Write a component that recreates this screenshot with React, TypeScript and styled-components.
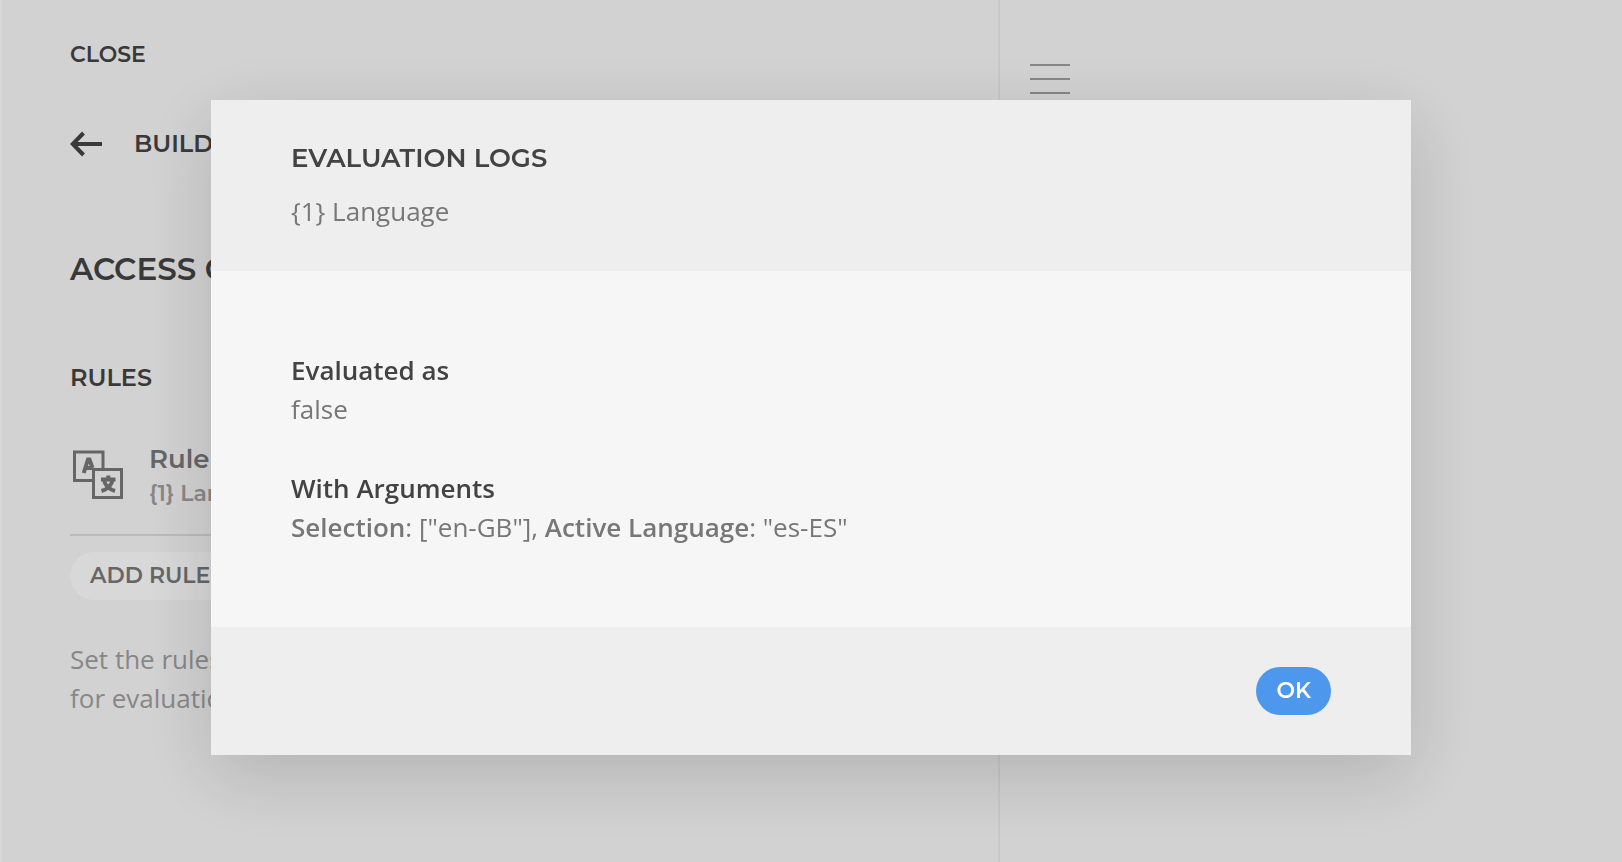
import React from "react";
import styled, { createGlobalStyle } from "styled-components";

const display = `Montserrat, Inter, "Liberation Sans", sans-serif`;
const text = `"Open Sans", "Noto Sans", sans-serif`;

const GlobalStyle = createGlobalStyle`
  *, *::before, *::after { box-sizing: border-box; }
  body { margin: 0; background: #f5f5f5; font-family: ${text}; }
  h1, h2, h3, p, dl, dt, dd, ul { margin: 0; padding: 0; }
  button { border: 0; padding: 0; background: none; cursor: pointer; }
`;

const Page = styled.div`
  display: grid;
  grid-template-columns: minmax(0, 1000px) 1fr;
  min-height: 100vh;
`;

const Panel = styled.main`
  display: flex;
  flex-direction: column;
  align-items: flex-start;
  padding: 40px 68px;
  border-left: 2px solid #fcfcfc;
  border-right: 2px solid #e9e9e9;
`;

const Aside = styled.aside`
  padding: 64px 30px;
`;

const CloseButton = styled.button`
  font: 600 22px/30px ${display};
  color: #434343;
`;

const BackRow = styled.div`
  display: flex;
  align-items: center;
  gap: 32px;
  margin-top: 58px;
`;

const BackButton = styled.button`
  display: flex;
  color: #434343;
`;

const PageTitle = styled.h1`
  font: 600 24px/32px ${display};
  color: #434343;
`;

const SectionTitle = styled.h2`
  margin-top: 90px;
  font: 600 31px/38px ${display};
  color: #434343;
`;

const Rules = styled.section`
  align-self: stretch;
  display: flex;
  flex-direction: column;
  align-items: flex-start;
  margin-top: 74px;
`;

const RulesTitle = styled.h3`
  font: 600 24px/32px ${display};
  color: #434343;
`;

const RuleList = styled.ul`
  align-self: stretch;
  list-style: none;
  margin-top: 48px;
`;

const RuleItem = styled.li`
  display: flex;
  align-items: center;
  gap: 25px;
  padding-bottom: 22px;
  border-bottom: 2px solid #dadada;
`;

const RuleName = styled.p`
  font: 600 26px/34px ${display};
  color: #777;
`;

const RuleSource = styled.p`
  font: 600 22px/36px ${display};
  color: #9e9e9e;
`;

const Pill = styled.button<{ $primary?: boolean }>`
  height: 48px;
  padding: 0 20px;
  border-radius: 24px;
  font: 600 22px/28px ${display};
  color: ${(p) => (p.$primary ? "#fff" : "#777")};
  background: ${(p) => (p.$primary ? "#4d97ed" : "#fcfcfc")};
`;

const AddRule = styled(Pill)`
  margin-top: 16px;
`;

const Hint = styled.p`
  margin-top: 40px;
  font: 400 26px/39px ${text};
  color: #9e9e9e;
`;

const MenuButton = styled.button`
  display: flex;
  flex-direction: column;
  gap: 12px;
  width: 40px;
`;

const MenuBar = styled.span`
  height: 2px;
  width: 100%;
  background: #9e9e9e;
`;

const Overlay = styled.div`
  position: fixed;
  inset: 0;
  display: flex;
  justify-content: center;
  align-items: flex-start;
  padding-top: 100px;
  overflow: auto;
  background: rgba(0, 0, 0, 0.143);
`;

const Dialog = styled.div`
  width: 100%;
  max-width: 1200px;
  background: #f6f6f6;
  box-shadow: 0 20px 70px rgba(0, 0, 0, 0.16);
`;

const DialogHeader = styled.header`
  padding: 40px 80px;
  background: #eee;
`;

const DialogTitle = styled.h2`
  font: 600 26px/36px ${display};
  color: #434343;
`;

const DialogSubtitle = styled.p`
  margin-top: 16px;
  font: 400 26px/39px ${text};
  color: #777;
`;

const Results = styled.dl`
  display: flex;
  flex-direction: column;
  gap: 40px;
  padding: 80px;
  font: 400 26px/39px ${text};
  color: #777;
`;

const Term = styled.dt`
  font-weight: 600;
  color: #434343;
`;

const Name = styled.strong`
  font-weight: 600;
`;

const DialogFooter = styled.footer`
  display: flex;
  justify-content: flex-end;
  padding: 40px 80px;
  background: #eee;
`;

const BackArrow = () => (
  <svg width="32" height="26" viewBox="0 0 32 26" fill="none" stroke="currentColor" strokeWidth="4" aria-hidden="true">
    <path d="M32 13H3M13.5 2L2.8 13l10.7 11" />
  </svg>
);

const LanguageIcon = () => (
  <svg width="54" height="54" viewBox="0 0 54 54" fill="none" stroke="#777" strokeWidth="3" aria-hidden="true">
    <path d="M22 30.5H4.500V2h28.500V18" />
    <rect x="23.500" y="19.500" width="28" height="28" />
    <path strokeWidth="4" d="M13.700 23L18 9.500h1.500L22.500 18M15 18h7" />
    <path strokeWidth="4" d="M31 29.500h14.500M38.300 25.500v4M34 30c1 6 5 9 11 11M42.500 30c-1 6-5 9-11 11" />
  </svg>
);

export default function App() {
  return (
    <>
      <GlobalStyle />
      <Page>
        <Panel>
          <CloseButton type="button">CLOSE</CloseButton>
          <BackRow>
            <BackButton type="button" aria-label="Back">
              <BackArrow />
            </BackButton>
            <PageTitle>BUILD</PageTitle>
          </BackRow>
          <SectionTitle>ACCESS CONTROL</SectionTitle>
          <Rules>
            <RulesTitle>RULES</RulesTitle>
            <RuleList>
              <RuleItem>
                <LanguageIcon />
                <div>
                  <RuleName>Rule</RuleName>
                  <RuleSource>{"{1} Language"}</RuleSource>
                </div>
              </RuleItem>
            </RuleList>
            <AddRule type="button">ADD RULE</AddRule>
            <Hint>
              Set the rules
              <br />
              for evaluation
            </Hint>
          </Rules>
        </Panel>
        <Aside>
          <MenuButton type="button" aria-label="Menu">
            <MenuBar />
            <MenuBar />
            <MenuBar />
          </MenuButton>
        </Aside>
      </Page>
      <Overlay>
        <Dialog role="dialog" aria-modal="true" aria-labelledby="dialog-title">
          <DialogHeader>
            <DialogTitle id="dialog-title">EVALUATION LOGS</DialogTitle>
            <DialogSubtitle>{"{1} Language"}</DialogSubtitle>
          </DialogHeader>
          <Results>
            <div>
              <Term>Evaluated as</Term>
              <dd>false</dd>
            </div>
            <div>
              <Term>With Arguments</Term>
              <dd>
                <Name>Selection</Name>: ["en-GB"], <Name>Active Language</Name>: "es-ES"
              </dd>
            </div>
          </Results>
          <DialogFooter>
            <Pill type="button" $primary>OK</Pill>
          </DialogFooter>
        </Dialog>
      </Overlay>
    </>
  );
}
